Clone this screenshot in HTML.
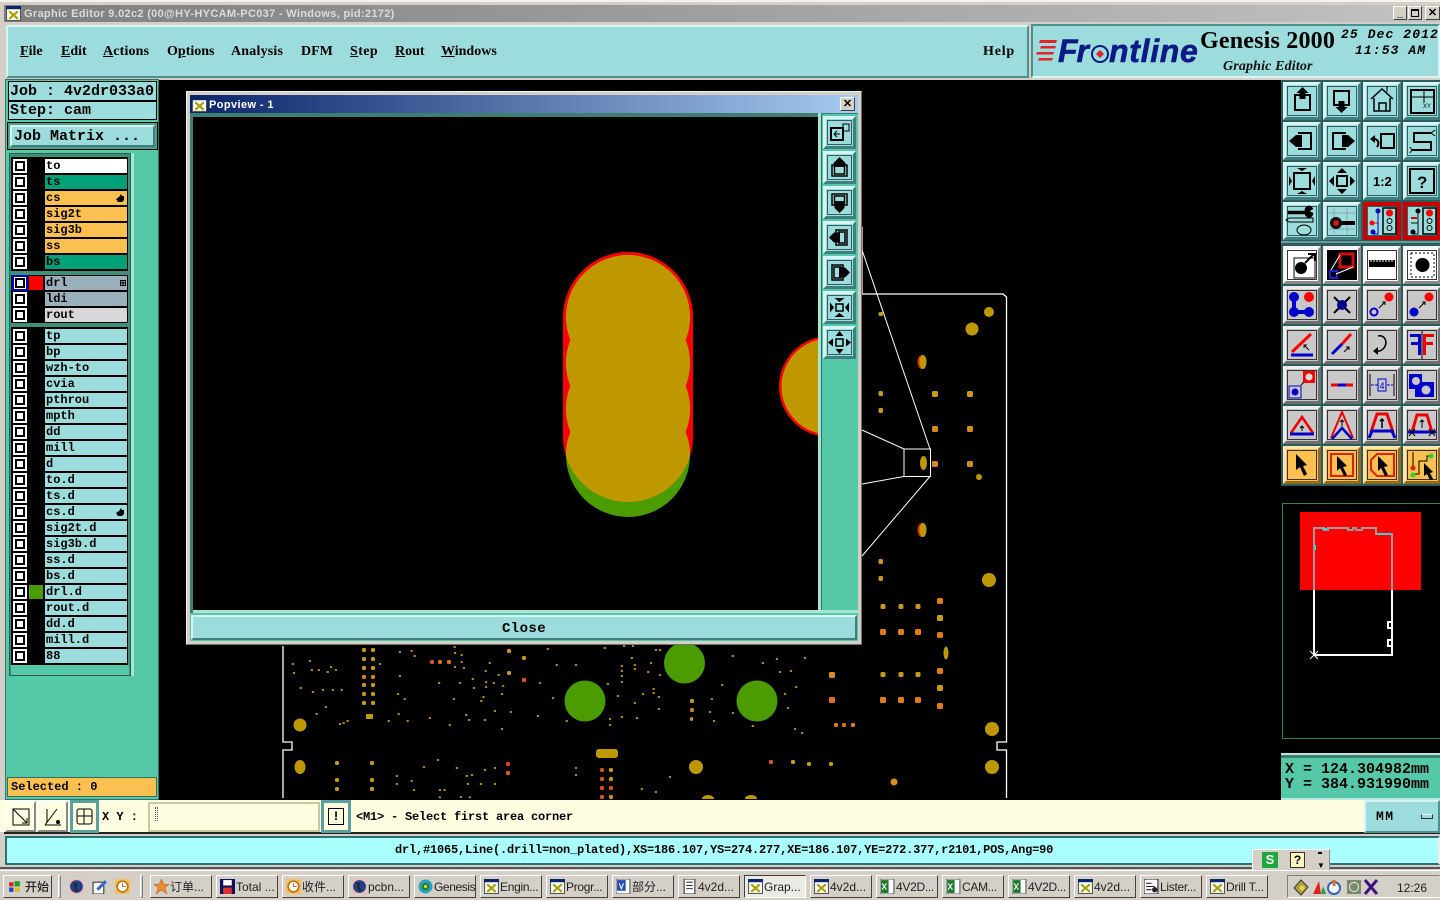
<!DOCTYPE html>
<html><head><meta charset="utf-8"><title>Graphic Editor</title>
<style>
html,body{margin:0;padding:0;background:#000;width:1440px;height:900px;overflow:hidden}
div,span{box-sizing:border-box}
.a,.l,.c,.s,.b,.t,.m{position:absolute}
.m{top:43px;font:bold 14px/17px "Liberation Serif",serif;color:#000;white-space:nowrap}
.m u{text-decoration:underline}
.f{font-family:"Liberation Mono",monospace;font-weight:bold;color:#000;white-space:pre}
.l{left:45px;width:82px;height:14px;font:bold 12px/15px "Liberation Mono",monospace;color:#000;padding-left:1px;background:#9cdcdc;white-space:pre;overflow:hidden}
.c{left:13px;width:14px;height:14px;background:#fff;border:1px solid #fff}
.c:after{content:"";position:absolute;left:1px;top:1px;width:10px;height:10px;border:2px solid #000;box-sizing:border-box;background:#fff}
.b{width:38px;height:38px;border:3px solid;border-color:#d8f4f4 #3f7f7f #3f7f7f #d8f4f4;background:#9cdcdc}
.b:after{content:"";position:absolute;left:1px;top:1px;right:1px;bottom:1px;border:1px solid #2f5f5f}
.w{background:#fff;border-color:#f4f4f4 #8a8a8a #8a8a8a #f4f4f4}
.g{background:#c8c8c8;border-color:#ededed #6f6f6f #6f6f6f #ededed}
.g:after,.w:after,.o:after{border-color:#333}
.o{background:#fcc050;border-color:#ffe6b0 #8f6a20 #8f6a20 #ffe6b0}
.b svg{position:absolute;left:-3px;top:-3px;width:38px;height:38px;z-index:1;overflow:visible}
.p{width:33px;height:33px;left:823px}
.p svg{width:33px;height:33px}
.t{top:875px;height:23px;width:62px;background:#d4d0c8;border:1px solid;border-color:#fff #404040 #404040 #fff;font:12px/23px "Liberation Sans","Noto Sans CJK SC",sans-serif;color:#222;padding-left:19px;white-space:nowrap;overflow:hidden}
.t svg{position:absolute;left:3px;top:3px;width:15px;height:15px}
#q rect,#r rect{rx:1.5px}
</style></head><body>
<svg width="0" height="0" style="position:absolute"><defs>
<symbol id="x" viewBox="0 0 14 14"><rect x=".5" y=".5" width="13" height="13" fill="#fff" stroke="#555"/><rect width="14" height="3" fill="#0a246a"/><path d="M3 5l8 7M11 5l-8 7" stroke="#a8a000" stroke-width="2"/></symbol>
<symbol id="xl" viewBox="0 0 14 14"><rect width="13" height="14" fill="#fff" stroke="#555"/><path d="M1 1h7v12H1z" fill="#1a7a2a"/><path d="M2 4l4 6M6 4l-4 6" stroke="#fff"/></symbol>
<symbol id="gl" viewBox="0 0 14 14"><rect width="14" height="14" fill="#e8c0c0"/><circle cx="7" cy="7" r="6" fill="#24408a"/><path d="M4 3l4 1-1 4 2 3-3 1-1-4z" fill="#2a2a2a"/></symbol>
<symbol id="cl" viewBox="0 0 14 14"><rect width="14" height="14" fill="#f4c060"/><circle cx="7" cy="7" r="5" fill="#fff" stroke="#c07010" stroke-width="1.5"/><path d="M7 4v3h3" stroke="#c07010" fill="none"/></symbol>
</defs></svg>

<!-- window chrome -->
<div class="a" style="left:0;top:0;width:1440px;height:80px;background:#d4d0c8"></div>
<div class="a" style="left:0;top:0;width:1440px;height:2px;background:#f4f2ec"></div>
<div class="a" style="left:4px;top:5px;width:1436px;height:17px;background:linear-gradient(90deg,#7e7e7e,#c2c2c2)"></div>
<svg class="a" style="left:6px;top:6px" width="15" height="15"><use href="#x"/></svg>
<div class="a" style="left:24px;top:6px;font:bold 11px/16px 'Liberation Sans',sans-serif;color:#dcdcdc;white-space:nowrap;letter-spacing:.32px">Graphic Editor 9.02c2 (00@HY-HYCAM-PC037 - Windows, pid:2172)</div>
<div class="a" style="left:1393px;top:6px;width:14px;height:14px;background:#d4d0c8;border:1px solid;border-color:#fff #404040 #404040 #fff;font:bold 11px/12px 'Liberation Sans';text-align:center">_</div>
<div class="a" style="left:1408px;top:6px;width:14px;height:14px;background:#d4d0c8;border:1px solid;border-color:#fff #404040 #404040 #fff"><div class="a" style="left:2px;top:2px;width:8px;height:8px;border:1px solid #000;border-top-width:2px"></div></div>
<div class="a" style="left:1425px;top:6px;width:15px;height:14px;background:#d4d0c8;border:1px solid;border-color:#fff #404040 #404040 #fff;font:bold 11px/12px 'Liberation Sans';text-align:center">✕</div>

<!-- menu -->
<div class="a" style="left:6px;top:25px;width:1023px;height:53px;background:#9cdcdc;border:2px solid;border-color:#d8f4f4 #4f8f8f #4f8f8f #d8f4f4"></div>
<div class="a" style="left:1031px;top:24px;width:409px;height:54px;background:#9cdcdc;border:2px solid;border-color:#4f8f8f #d8f4f4 #d8f4f4 #4f8f8f"></div>
<div class="m" style="left:20px"><u>F</u>ile</div>
<div class="m" style="left:61px"><u>E</u>dit</div>
<div class="m" style="left:103px;letter-spacing:.15px"><u>A</u>ctions</div>
<div class="m" style="left:167px">O<u>p</u>tions</div>
<div class="m" style="left:231px;letter-spacing:.2px">Analysis</div>
<div class="m" style="left:301px">DFM</div>
<div class="m" style="left:350px;letter-spacing:.4px"><u>S</u>tep</div>
<div class="m" style="left:395px"><u>R</u>out</div>
<div class="m" style="left:441px"><u>W</u>indows</div>
<div class="m" style="left:983px;letter-spacing:.8px">Help</div>

<svg class="a" style="left:1036px;top:36px" width="24" height="28"><path d="M4 4h17l-1 3H3zM5 10h15l-1 2.500H4zM1 16h17l-1 2.500H0zM3 22h14l-1 2.500H2z" fill="#e8202a"/></svg>
<div class="a" style="left:1058px;top:32px;font:italic bold 32px/38px 'Liberation Sans',sans-serif;color:#0c1a86;letter-spacing:-1px;white-space:nowrap;-webkit-text-stroke:.6px #0c1a86">Fr<span style="display:inline-block;width:21px"></span><span style="letter-spacing:.7px">ntline</span></div>
<svg class="a" style="left:1089px;top:41px" width="22" height="22"><circle cx="11" cy="13" r="8" fill="none" stroke="#0c1a86" stroke-width="2"/><path d="M11 9l4 4-4 4-4-4z" fill="#e8202a"/></svg>
<div class="a" style="left:1200px;top:26px;font:bold 24px/30px 'Liberation Serif',serif;color:#000;white-space:nowrap;letter-spacing:.2px">Genesis 2000</div>
<div class="a" style="left:1223px;top:58px;font:italic bold 14px/17px 'Liberation Serif',serif;color:#111;white-space:nowrap;letter-spacing:.15px">Graphic Editor</div>
<div class="a f" style="left:1341px;top:27px;font-size:13px;line-height:15px;font-style:italic;letter-spacing:1.1px">25 Dec 2012</div>
<div class="a f" style="left:1355px;top:43px;font-size:13px;line-height:15px;font-style:italic;letter-spacing:1.1px">11:53 AM</div>

<!-- PCB canvas -->
<svg class="a" style="left:0;top:0" width="1440" height="900">
<g fill="#bf9800">
<path d="M862 227V294H1003L1006.500 297V742H997V750H1006.500V798" fill="none" stroke="#fff" stroke-width="1.300"/>
<path d="M862 250L930 449M904 449L862 430M904 476.500L862 484M930 476.500L862 556M904 449H930.500V476.500H904Z" fill="none" stroke="#fff" stroke-width="1"/>
<path d="M283 646V742H292V750H283V798" fill="none" stroke="#fff" stroke-width="1.300"/>
<circle cx="989" cy="312" r="5"/><circle cx="972" cy="329" r="6.500"/><circle cx="989" cy="580" r="7"/><circle cx="992" cy="729" r="7"/><circle cx="992" cy="767" r="7"/><circle cx="979" cy="477" r="3"/><circle cx="894" cy="782" r="3.500" fill="#d8901a"/>
<ellipse cx="922" cy="362" rx="4.500" ry="7" fill="#e03010"/><ellipse cx="923" cy="362" rx="3.500" ry="7"/>
<ellipse cx="922" cy="530" rx="4.500" ry="7" fill="#e03010"/><ellipse cx="923" cy="530" rx="3.500" ry="7"/>
<ellipse cx="923.500" cy="463" rx="3.500" ry="7"/>
<ellipse cx="946" cy="653" rx="2.500" ry="6.500"/>
<g id="r" fill="#c89a18"><rect x="878.500" y="391" width="4.500" height="5"/><rect x="878.500" y="408" width="4.500" height="5"/><rect x="878.500" y="559" width="4.500" height="5"/><rect x="878.500" y="576" width="4.500" height="5"/><rect x="878.500" y="312" width="4.500" height="4"/>
<rect x="932" y="391" width="6" height="6"/><rect x="967" y="391" width="6" height="6"/><rect x="932" y="426" width="6" height="6" fill="#d88a18"/><rect x="967" y="426" width="6" height="6" fill="#d88a18"/><rect x="932" y="461" width="6" height="6" fill="#d88a18"/><rect x="967" y="461" width="6" height="6" fill="#d88a18"/>
<rect x="880.500" y="604" width="5" height="5"/><rect x="898.500" y="604" width="5" height="5"/><rect x="915.500" y="604" width="5" height="5"/><rect x="880" y="629" width="6" height="6" fill="#e07a18"/><rect x="898" y="629" width="6" height="6" fill="#e07a18"/><rect x="915" y="629" width="6" height="6" fill="#e07a18"/>
<rect x="880.500" y="672" width="5" height="5"/><rect x="898.500" y="672" width="5" height="5"/><rect x="915.500" y="672" width="5" height="5"/><rect x="880" y="697" width="6" height="6" fill="#e07a18"/><rect x="898" y="697" width="6" height="6" fill="#e07a18"/><rect x="915" y="697" width="6" height="6" fill="#e07a18"/>
<rect x="937" y="598" width="6" height="6" fill="#e07a18"/><rect x="937" y="615" width="6" height="6"/><rect x="937" y="632" width="6" height="6" fill="#e07a18"/><rect x="937" y="668" width="6" height="6" fill="#e07a18"/><rect x="937" y="685" width="6" height="6"/><rect x="937" y="703" width="6" height="6" fill="#e07a18"/>
</g>
<g fill="#4a9c00"><circle cx="684.500" cy="663" r="20.500"/><circle cx="585" cy="701" r="20.500"/><circle cx="757" cy="701" r="20.500"/></g>
<circle cx="300" cy="725" r="6.500"/><ellipse cx="300" cy="767" rx="5.500" ry="7"/><circle cx="696" cy="767" r="7"/>
<rect x="596" y="749" width="22" height="9" rx="3"/><rect x="366" y="714" width="7" height="5"/>
<path d="M702 799a6 4 0 0 1 12 0zM745 799a6 4 0 0 1 12 0z"/>
<g id="q" fill="#c89a10">
<rect x="362" y="648" width="4" height="4"/><rect x="371" y="648" width="4" height="4"/><rect x="362" y="657" width="4" height="4"/><rect x="371" y="657" width="4" height="4"/><rect x="362" y="666" width="4" height="4"/><rect x="371" y="666" width="4" height="4"/><rect x="362" y="675" width="4" height="4" fill="#d8801a"/><rect x="371" y="675" width="4" height="4" fill="#d8801a"/><rect x="362" y="683" width="4" height="4"/><rect x="371" y="683" width="4" height="4"/><rect x="362" y="692" width="4" height="4"/><rect x="371" y="692" width="4" height="4"/><rect x="362" y="701" width="4" height="4"/><rect x="371" y="701" width="4" height="4"/>
<rect x="335" y="761" width="4" height="4"/><rect x="370" y="761" width="4" height="4"/><rect x="335" y="778" width="4" height="4"/><rect x="370" y="778" width="4" height="4"/><rect x="335" y="787" width="4" height="4"/><rect x="370" y="787" width="4" height="4"/>
<rect x="430" y="660" width="4" height="4" fill="#e0501a"/><rect x="438" y="660" width="4" height="4" fill="#e0701a"/><rect x="447" y="660" width="4" height="4" fill="#e0701a"/>
<rect x="507" y="649" width="4" height="4"/><rect x="522" y="656" width="4" height="4"/><rect x="507" y="671" width="4" height="4"/><rect x="522" y="678" width="4" height="4" fill="#e0501a"/><rect x="506" y="762" width="4" height="4" fill="#e8401a"/><rect x="506" y="771" width="4" height="4" fill="#e0601a"/>
<rect x="600" y="768" width="4" height="4" fill="#e0501a"/><rect x="609" y="768" width="4" height="4"/><rect x="600" y="777" width="4" height="4" fill="#e0501a"/><rect x="609" y="777" width="4" height="4"/><rect x="600" y="786" width="4" height="4" fill="#e0501a"/><rect x="609" y="786" width="4" height="4" fill="#e0501a"/><rect x="600" y="795" width="4" height="4" fill="#e0501a"/><rect x="609" y="795" width="4" height="4"/>
<rect x="690" y="699" width="4" height="4"/><rect x="690" y="708" width="4" height="4" fill="#d8801a"/><rect x="690" y="717" width="3" height="4"/>
<rect x="829" y="672" width="6" height="6" fill="#d8901a"/><rect x="829" y="697" width="6" height="6" fill="#e0701a"/><rect x="834" y="723" width="4" height="4" fill="#d8801a"/><rect x="842" y="723" width="4" height="4" fill="#e0701a"/><rect x="851" y="723" width="4" height="4" fill="#d8801a"/>
<rect x="769" y="760" width="4" height="4" fill="#e0501a"/><rect x="791" y="760" width="4" height="4"/><rect x="807" y="762" width="4" height="4"/><rect x="829" y="762" width="4" height="4"/>
</g>
<g transform="translate(280 640) scale(.37 .3333)"><path fill="none" stroke="#c89a10" stroke-width="5" d="M32 72h6M78 63h6M35 99h6M83 90h6M102 90h6M126 96h6M135 81h6M148 90h6M53 144h6M86 156h6M113 150h6M140 150h6M164 150h6M121 201h6M96 222h6M159 252h6M169 249h6M180 243h6M267 72h6M321 36h6M353 33h6M361 48h6M321 108h6M316 162h6M334 177h6M318 222h6M291 243h6M342 243h6M402 234h6M427 129h6M469 21h6M470 39h6M488 45h6M488 66h6M470 81h6M494 84h6M483 129h6M467 177h6M518 117h6M521 144h6M553 93h6M554 126h6M554 141h6M575 129h6M588 105h6M600 138h6M597 162h6M547 171h6M541 183h6M564 69h6M578 213h6M621 216h6M500 225h6M508 240h6M551 240h6M456 255h6M597 267h6M694 228h6M700 129h6M735 174h6M721 27h6M745 75h6M797 75h6M772 243h6M875 24h6M927 18h6M951 18h6M1013 30h6M1024 30h6M948 54h6M921 78h6M921 93h6M921 108h6M921 126h6M956 75h6M956 87h6M1000 69h6M992 96h6M1024 105h6M883 132h6M910 168h6M956 189h6M978 162h6M1007 147h6M1007 159h6M1021 171h6M1021 207h6M889 237h6M889 255h6M921 231h6M962 234h6M1164 177h6M1159 216h6M1170 243h6M1192 135h6M1221 48h6M1221 219h6M1275 258h6M1302 69h6M1340 57h6M1348 96h6M1378 93h6M1416 54h6M1392 141h6M1362 162h6M1370 204h6M1389 267h6M1408 279h6M424 360h6M386 381h6M475 384h6M551 390h6M578 384h6M502 408h6M516 405h6M505 432h6M540 432h6M578 432h6M313 408h6M353 423h6M313 432h6M359 450h6M429 450h6M442 450h6M429 472h6M486 471h6M510 472h6M797 384h6M797 405h6M1051 411h6M975 447h6M1013 456h6"/></g>
</g>
</svg>

<!-- left panel -->
<div class="a" style="left:0;top:78px;width:6px;height:760px;background:#d4d0c8"></div>
<div class="a" style="left:5px;top:79px;width:154px;height:721px;background:#55c8a8;border:1px solid;border-color:#2f6f5f #2f6f5f #2f6f5f #3a7a6a"></div>
<div class="a f" style="left:8px;top:81px;width:149px;height:20px;background:#9cdcdc;border:1px solid #000;font-size:15px;line-height:20px;padding-left:1px">Job : 4v2dr033a0</div>
<div class="a f" style="left:8px;top:101px;width:149px;height:19px;background:#9cdcdc;border:1px solid #000;font-size:15px;line-height:18px;padding-left:1px">Step: cam</div>
<div class="a" style="left:7px;top:122px;width:151px;height:28px;background:#4aa088;border:1px solid #000"></div>
<div class="a f" style="left:10px;top:125px;width:145px;height:22px;background:#9cdcdc;border:2px solid;border-color:#d8f4f4 #3f7f7f #3f7f7f #d8f4f4;font-size:15px;line-height:19px;padding-left:2px">Job Matrix ...</div>
<div class="a" style="left:9px;top:153px;width:122px;height:523px;background:#3d8f78;border:1px solid #2a5f50"></div>
<div class="a" style="left:131px;top:153px;width:3px;height:523px;background:#a8e4d4"></div>
<div class="a" style="left:11px;top:157px;width:117px;height:114px;background:#000"></div>
<div class="a" style="left:11px;top:275px;width:117px;height:48px;background:#000"></div>
<div class="a" style="left:11px;top:327px;width:117px;height:338px;background:#000"></div>
<div class="a" style="left:11px;top:665px;width:118px;height:10px;background:#55c8a8"></div>

<div class="c" style="top:159px"></div><div class="l" style="top:159px;background:#fff">to</div>
<div class="c" style="top:175px"></div><div class="l" style="top:175px;background:#00a078">ts</div>
<div class="c" style="top:191px"></div><div class="l" style="top:191px;background:#fcc050">cs</div>
<div class="c" style="top:207px"></div><div class="l" style="top:207px;background:#fcc050">sig2t</div>
<div class="c" style="top:223px"></div><div class="l" style="top:223px;background:#fcc050">sig3b</div>
<div class="c" style="top:239px"></div><div class="l" style="top:239px;background:#fcc050">ss</div>
<div class="c" style="top:255px"></div><div class="l" style="top:255px;background:#00a078">bs</div>
<svg class="a" style="left:116px;top:194px" width="9" height="9"><path d="M0 5l3-2 2-3 1 2h2v4l-2 2H2z"/></svg>

<div class="a" style="left:12px;top:275px;width:16px;height:16px;background:#0000c8"></div>
<div class="c" style="top:276px;left:13px;border-color:#0000c8"></div>
<div class="a" style="left:29px;top:276px;width:14px;height:14px;background:#f00"></div>
<div class="l" style="top:276px;background:#9ab0bc">drl</div>
<svg class="a" style="left:120px;top:280px" width="6" height="6"><path d="M.5.500h5v5h-5zM3 0v6M0 3h6" fill="none" stroke="#000"/></svg>
<div class="c" style="top:292px"></div><div class="l" style="top:292px;background:#9ab0bc">ldi</div>
<div class="c" style="top:308px"></div><div class="l" style="top:308px;background:#d8d8d8">rout</div>

<div class="c" style="top:329px"></div><div class="l" style="top:329px">tp</div>
<div class="c" style="top:345px"></div><div class="l" style="top:345px">bp</div>
<div class="c" style="top:361px"></div><div class="l" style="top:361px">wzh-to</div>
<div class="c" style="top:377px"></div><div class="l" style="top:377px">cvia</div>
<div class="c" style="top:393px"></div><div class="l" style="top:393px">pthrou</div>
<div class="c" style="top:409px"></div><div class="l" style="top:409px">mpth</div>
<div class="c" style="top:425px"></div><div class="l" style="top:425px">dd</div>
<div class="c" style="top:441px"></div><div class="l" style="top:441px">mill</div>
<div class="c" style="top:457px"></div><div class="l" style="top:457px">d</div>
<div class="c" style="top:473px"></div><div class="l" style="top:473px">to.d</div>
<div class="c" style="top:489px"></div><div class="l" style="top:489px">ts.d</div>
<div class="c" style="top:505px"></div><div class="l" style="top:505px">cs.d</div>
<svg class="a" style="left:116px;top:508px" width="9" height="9"><path d="M0 5l3-2 2-3 1 2h2v4l-2 2H2z"/></svg>
<div class="c" style="top:521px"></div><div class="l" style="top:521px">sig2t.d</div>
<div class="c" style="top:537px"></div><div class="l" style="top:537px">sig3b.d</div>
<div class="c" style="top:553px"></div><div class="l" style="top:553px">ss.d</div>
<div class="c" style="top:569px"></div><div class="l" style="top:569px">bs.d</div>
<div class="c" style="top:585px"></div><div class="a" style="left:29px;top:585px;width:14px;height:14px;background:#4a9c00"></div><div class="l" style="top:585px">drl.d</div>
<div class="c" style="top:601px"></div><div class="l" style="top:601px">rout.d</div>
<div class="c" style="top:617px"></div><div class="l" style="top:617px">dd.d</div>
<div class="c" style="top:633px"></div><div class="l" style="top:633px">mill.d</div>
<div class="c" style="top:649px"></div><div class="l" style="top:649px">88</div>

<div class="a f" style="left:7px;top:777px;width:150px;height:20px;background:#fcc050;border:1px solid #2f6f5f;font-size:12px;line-height:19px;padding-left:3px">Selected : 0</div>

<!-- popview -->
<div class="a" style="left:186px;top:91px;width:676px;height:554px;background:#d4d0c8;border:1px solid;border-color:#f0f0f0 #707070 #707070 #f0f0f0"></div>
<div class="a" style="left:190px;top:95px;width:668px;height:18px;background:linear-gradient(90deg,#0a246a,#a6caf0)"></div>
<svg class="a" style="left:192px;top:97px" width="15" height="15"><use href="#x"/></svg>
<div class="a" style="left:209px;top:97px;font:bold 11px/16px 'Liberation Sans',sans-serif;color:#fff;white-space:nowrap;letter-spacing:.4px">Popview - 1</div>
<div class="a" style="left:840px;top:97px;width:15px;height:14px;background:#d4d0c8;border:1px solid;border-color:#fff #404040 #404040 #fff;font:bold 11px/12px 'Liberation Sans';text-align:center">✕</div>
<div class="a" style="left:190px;top:113px;width:668px;height:528px;background:#3f7f70"></div>
<div class="a" style="left:193px;top:117px;width:625px;height:494px;background:#000;overflow:hidden">
<svg width="625" height="494" viewBox="193 117 625 494" style="display:block">
<defs><clipPath id="rs"><rect x="563" y="252" width="130" height="250" rx="65"/></clipPath></defs>
<rect x="563" y="252" width="130" height="250" rx="65" fill="#f00"/>
<g fill="#4a9c00"><circle cx="628" cy="317" r="62"/><circle cx="628" cy="363" r="62"/><circle cx="628" cy="409" r="62"/><circle cx="628" cy="455" r="62"/></g>
<g fill="#bf9800" clip-path="url(#rs)"><circle cx="628" cy="317" r="62"/><circle cx="628" cy="363" r="62"/><circle cx="628" cy="409" r="62"/><circle cx="628" cy="455" r="62"/></g>
<circle cx="829.500" cy="386.500" r="50.500" fill="#f00"/><circle cx="829.500" cy="386.500" r="48" fill="#bf9800"/>
</svg></div>
<div class="a" style="left:818px;top:113px;width:3px;height:500px;background:#a8e4d4"></div>
<div class="a" style="left:821px;top:114px;width:37px;height:498px;background:#55c8a8;border-left:1px solid #2f6f5f"></div>
<div class="a" style="left:193px;top:610px;width:665px;height:3px;background:#a8e4d4"></div>
<div class="a" style="left:190px;top:613px;width:668px;height:28px;background:#55c8a8"></div>
<div class="a f" style="left:191px;top:615px;width:666px;height:25px;background:#9cdcdc;border:2px solid;border-color:#d8f4f4 #3f7f7f #3f7f7f #d8f4f4;font-size:14px;line-height:25px;text-align:center;letter-spacing:.4px">Close</div>

<div class="b p" style="top:116px"><svg viewBox="0 0 33 33"><path d="M8 12h12v12H8z" fill="none" stroke="#000" stroke-width="2"/><path d="M11 18h6M11 18l3-3M11 18l3 3" stroke="#000" fill="none"/><path d="M20 8h6v7h-6z" fill="none" stroke="#000"/></svg></div>
<div class="b p" style="top:151px"><svg viewBox="0 0 33 33"><path d="M9 14h15v11H9zM11.500 16v7h10v-7" fill="none" stroke="#000" stroke-width="1.500"/><path d="M16.500 6l-6 6v4h12v-4z"/></svg></div>
<div class="b p" style="top:186px"><svg viewBox="0 0 33 33"><path d="M9 8h15v11H9zM11.500 10v7h10v-7z" fill="none" stroke="#000" stroke-width="1.500"/><path d="M16.500 27l-5-5v-7h10v7z"/></svg></div>
<div class="b p" style="top:221px"><svg viewBox="0 0 33 33"><path d="M13 9h11v15H13zM15 11h7v11h-7" fill="none" stroke="#000" stroke-width="1.500"/><path d="M6 16.500l5-5h6v10h-6z"/></svg></div>
<div class="b p" style="top:256px"><svg viewBox="0 0 33 33"><path d="M9 9h11v15H9zM11 11h7v11h-7z" fill="none" stroke="#000" stroke-width="1.500"/><path d="M27 16.500l-5-5h-6v10h6z"/></svg></div>
<div class="b p" style="top:291px"><svg viewBox="0 0 33 33"><rect x="13" y="13" width="7" height="7" fill="none" stroke="#000" stroke-width="1.500"/><path d="M16.500 11l-5-4h10zM16.500 22l-5 4h10zM11 16.500l-4-5v10zM22 16.500l4-5v10z"/></svg></div>
<div class="b p" style="top:326px"><svg viewBox="0 0 33 33"><rect x="13" y="13" width="7" height="7" fill="none" stroke="#000" stroke-width="1.500"/><path d="M16.500 5l-4 5h8zM16.500 28l-4-5h8zM5 16.500l5-4v8zM28 16.500l-5-4v8z"/></svg></div>

<!-- right panel -->
<div class="a" style="left:1281px;top:80px;width:159px;height:406px;background:#2c5c5c"></div>
<div class="a" style="left:1281px;top:241px;width:159px;height:2px;background:#6a9a9a"></div>
<div class="a" style="left:1282px;top:503px;width:158px;height:236px;border:1px solid #3f7f3f;border-right:0"></div>
<svg class="a" style="left:1282px;top:503px" width="158" height="236">
<rect x="18" y="9" width="121" height="78" fill="#f00"/>
<g transform="translate(-1282 -503)" fill="none" stroke-width="2">
<path d="M1314 590V655H1392V590M1392 622h-4v6h4M1392 640h-4v6h4" stroke="#fff"/>
<path d="M1310 651l8 8M1318 651l-8 8" stroke="#fff" stroke-width="1"/>
<path d="M1314 590V528H1324V530H1328V528H1348V530H1353V528H1356V530H1362V528H1376V534H1392V590" stroke="#9a9a9a"/>
<path d="M1322 529h5M1377 534h14M1315 545v5" stroke="#30d8e0"/>
</g></svg>
<div class="a" style="left:1281px;top:753px;width:159px;height:47px;background:#55c8a8;border-top:2px solid #b8e8e0;border-bottom:2px solid #b8e8e0"></div>
<div class="a" style="left:1281px;top:755px;width:159px;height:3px;background:#3f7f6f"></div>
<div class="a f" style="left:1285px;top:762px;font-size:15px;line-height:16px">X = 124.304982mm</div>
<div class="a f" style="left:1285px;top:777px;font-size:15px;line-height:16px">Y = 384.931990mm</div>

<!-- row 1 -->
<div class="b" style="left:1283px;top:82px"><svg viewBox="0 0 38 38"><rect x="12" y="13" width="15" height="15" fill="none" stroke="#000" stroke-width="2"/><path d="M19.500 5l-6 6h3v6h6v-6h3z"/></svg></div>
<div class="b" style="left:1323px;top:82px"><svg viewBox="0 0 38 38"><rect x="11" y="9" width="15" height="14" fill="none" stroke="#000" stroke-width="2"/><path d="M18.500 31l-6-6h3v-6h6v6h3z"/></svg></div>
<div class="b" style="left:1363px;top:82px"><svg viewBox="0 0 38 38"><path d="M8 17L19 7l11 10M11 16v13h16V16M16 29v-8h7v8" fill="none" stroke="#000" stroke-width="1.500"/><path d="M24 10V5h1" stroke="#000" fill="none"/></svg></div>
<div class="b" style="left:1403px;top:82px"><svg viewBox="0 0 38 38"><rect x="8" y="8" width="23" height="23" fill="none" stroke="#000" stroke-width="2"/><path d="M21 8v13M8 15h23" stroke="#000"/><text x="20" y="26" font-size="6" font-family="Liberation Sans" fill="#000">XY</text></svg></div>
<!-- row 2 -->
<div class="b" style="left:1283px;top:122px"><svg viewBox="0 0 38 38"><path d="M15 11h13v16H15" fill="none" stroke="#000" stroke-width="2"/><path d="M6 19l7-6h6v12h-6z"/></svg></div>
<div class="b" style="left:1323px;top:122px"><svg viewBox="0 0 38 38"><path d="M23 11H10v16h13" fill="none" stroke="#000" stroke-width="2"/><path d="M32 19l-7-6h-6v12h6z"/></svg></div>
<div class="b" style="left:1363px;top:122px"><svg viewBox="0 0 38 38"><rect x="18" y="12" width="13" height="14" fill="none" stroke="#000" stroke-width="2"/><path d="M14 25c3-4 1-9-5-8" fill="none" stroke="#000" stroke-width="2"/><path d="M7 17l5-4v8z"/></svg></div>
<div class="b" style="left:1403px;top:122px"><svg viewBox="0 0 38 38"><path d="M28 11H11v9h17v8H9" fill="none" stroke="#000" stroke-width="2"/><path d="M28 11l4-3M28 11l4 3M9 28l-2-3M9 28l-2 3" stroke="#000" fill="none"/></svg></div>
<!-- row 3 -->
<div class="b" style="left:1283px;top:162px"><svg viewBox="0 0 38 38"><rect x="11" y="11" width="16" height="16" fill="none" stroke="#000" stroke-width="2"/><path d="M19 9l-5-3h10zM19 29l-5 3h10zM9 19l-3-5v10zM29 19l3-5v10z"/></svg></div>
<div class="b" style="left:1323px;top:162px"><svg viewBox="0 0 38 38"><rect x="14" y="14" width="10" height="10" fill="none" stroke="#000" stroke-width="2"/><path d="M19 6l-5 5h10zM19 32l-5-5h10zM6 19l5-5v10zM32 19l-5-5v10z"/></svg></div>
<div class="b" style="left:1363px;top:162px"><svg viewBox="0 0 38 38"><text x="10" y="24" font-size="13" font-weight="bold" font-family="Liberation Sans" fill="#000">1:2</text></svg></div>
<div class="b" style="left:1403px;top:162px"><svg viewBox="0 0 38 38"><rect x="7" y="7" width="24" height="24" fill="none" stroke="#000" stroke-width="2"/><text x="14" y="26" font-size="17" font-weight="bold" font-family="Liberation Sans" fill="#000">?</text></svg></div>
<!-- row 4 -->
<div class="b" style="left:1283px;top:202px"><svg viewBox="0 0 38 38"><path d="M5 9h17a4 4 0 0 1 8-2l-4 2 4 2a4 4 0 0 1-8 1H5z" stroke="#000" fill="#000" stroke-width=".5"/><path d="M6 16h24v4H6l-3-2z" fill="none" stroke="#000"/><ellipse cx="21" cy="28" rx="7" ry="5" fill="none" stroke="#000"/></svg></div>
<div class="b" style="left:1323px;top:202px"><svg viewBox="0 0 38 38"><path d="M6 11h26M6 27h26M11 6v26M24 6v26" stroke="#8aa"/><rect x="16" y="19" width="16" height="4"/><circle cx="13" cy="21" r="6" fill="#111"/><rect x="10" y="18" width="6" height="6" fill="#c22" stroke="#300"/></svg></div>
<div class="b" style="left:1363px;top:202px;border-color:#b00;background:#9cdcdc"><svg viewBox="0 0 38 38"><rect x="2" y="2" width="34" height="34" fill="none" stroke="#c00" stroke-width="4"/><path d="M15 8v13H8M15 21v11" stroke="#f00" fill="none"/><path d="M15 8v24H10" stroke="#00c" fill="none"/><circle cx="15" cy="9" r="2.500" fill="#00c"/><circle cx="9" cy="21" r="2.500" fill="#f00"/><circle cx="10" cy="30" r="2.500" fill="#00c"/><rect x="20" y="6" width="13" height="26" fill="none" stroke="#000" stroke-width="1.500"/><circle cx="26.500" cy="11" r="3.500" fill="#f00"/><circle cx="26.500" cy="19" r="2.500" fill="none" stroke="#000"/><circle cx="26.500" cy="26" r="2.500" fill="none" stroke="#000"/></svg></div>
<div class="b" style="left:1403px;top:202px;border-color:#b00;background:#9cdcdc"><svg viewBox="0 0 38 38"><rect x="2" y="2" width="34" height="34" fill="none" stroke="#c00" stroke-width="4"/><path d="M15 8v13H8M15 21v11H10" stroke="#111" fill="none"/><path d="M8 16h6" stroke="#c00" stroke-width="2"/><circle cx="15" cy="9" r="2.500"/><circle cx="10" cy="30" r="2.500"/><rect x="20" y="6" width="13" height="26" fill="none" stroke="#000" stroke-width="1.500"/><circle cx="26.500" cy="11" r="3.500" fill="#f00"/><circle cx="26.500" cy="19" r="2.500" fill="none" stroke="#000"/><circle cx="26.500" cy="26" r="2.500" fill="none" stroke="#000"/></svg></div>
<!-- row 5 -->
<div class="b w" style="left:1283px;top:246px"><svg viewBox="0 0 38 38"><rect x="11" y="12" width="21" height="20" fill="none" stroke="#000"/><circle cx="18" cy="22" r="6"/><path d="M22 17l9-9M25 8h7v7" stroke="#000" stroke-width="2" fill="none"/></svg></div>
<div class="b w" style="left:1323px;top:246px"><svg viewBox="0 0 38 38"><rect x="4" y="4" width="30" height="30"/><rect x="17" y="8" width="13" height="13" fill="none" stroke="#d01010" stroke-width="3"/><rect x="7" y="25" width="7" height="7" fill="none" stroke="#2020d0" stroke-width="2"/><path d="M8 24L17 9M13 28l17-7" stroke="#fff"/></svg></div>
<div class="b w" style="left:1363px;top:246px"><svg viewBox="0 0 38 38"><path d="M6 14h26v7H6z"/><path d="M8 12v4M11 12v4M14 12v4M17 12v4M20 12v4M23 12v4M26 12v4M29 12v4" stroke="#fff"/></svg></div>
<div class="b w" style="left:1403px;top:246px"><svg viewBox="0 0 38 38"><rect x="8" y="7" width="23" height="24" fill="none" stroke="#000" stroke-dasharray="2 2"/><circle cx="19.500" cy="19" r="7"/></svg></div>
<!-- row 6 -->
<div class="b g" style="left:1283px;top:286px"><svg viewBox="0 0 38 38"><path d="M11 11v15h15" stroke="#00c" stroke-width="4" fill="none"/><circle cx="11" cy="11" r="5" fill="#00c"/><circle cx="11" cy="26" r="5" fill="#00c"/><circle cx="26" cy="26" r="5" fill="#00c"/><circle cx="26" cy="11" r="5" fill="#f00"/></svg></div>
<div class="b g" style="left:1323px;top:286px"><svg viewBox="0 0 38 38"><path d="M11 11l16 16M27 11L11 27" stroke="#000" stroke-width="2"/><circle cx="19" cy="19" r="5" fill="#00008a"/></svg></div>
<div class="b g" style="left:1363px;top:286px"><svg viewBox="0 0 38 38"><circle cx="26" cy="11" r="4.500" fill="#f00"/><circle cx="11" cy="26" r="3.500" fill="none" stroke="#00c" stroke-width="2"/><path d="M16 22l6-6M19 16h3v3" stroke="#000" fill="none"/></svg></div>
<div class="b g" style="left:1403px;top:286px"><svg viewBox="0 0 38 38"><circle cx="26" cy="11" r="4.500" fill="#f00"/><circle cx="11" cy="26" r="4.500" fill="#00c"/><path d="M16 22l6-6M19 16h3v3" stroke="#000" fill="none"/></svg></div>
<!-- row 7 -->
<div class="b g" style="left:1283px;top:326px"><svg viewBox="0 0 38 38"><path d="M9 26l19-18" stroke="#f00" stroke-width="3"/><path d="M8 29h22" stroke="#00c" stroke-width="3"/><path d="M26 24l-5-5M21 22v-3h3" stroke="#000" fill="none"/></svg></div>
<div class="b g" style="left:1323px;top:326px"><svg viewBox="0 0 38 38"><path d="M19 18l9-10" stroke="#f00" stroke-width="3"/><path d="M9 28l10-10" stroke="#00c" stroke-width="3"/><path d="M21 26l5-5M23 21h3v3" stroke="#000" fill="none"/></svg></div>
<div class="b g" style="left:1363px;top:326px"><svg viewBox="0 0 38 38"><path d="M15 10c8-2 12 10 2 15h-4" fill="none" stroke="#000" stroke-width="1.500"/><path d="M10 25l5-4v8z"/></svg></div>
<div class="b g" style="left:1403px;top:326px"><svg viewBox="0 0 38 38"><path d="M18 8H7v3h8v5H8v3h7v10h3z" fill="#00c"/><path d="M20 8h11v3h-8v5h7v3h-7v10h-3z" fill="#e00"/><path d="M19 5v28" stroke="#000"/></svg></div>
<!-- row 8 -->
<div class="b g" style="left:1283px;top:366px"><svg viewBox="0 0 38 38"><rect x="20" y="5" width="12" height="12" fill="#f00"/><circle cx="26" cy="11" r="3.500" fill="#ddd"/><rect x="6" y="20" width="12" height="12" fill="none" stroke="#00c"/><circle cx="12" cy="26" r="3.500" fill="#00c"/><path d="M18 19l3-3" stroke="#000"/></svg></div>
<div class="b g" style="left:1323px;top:366px"><svg viewBox="0 0 38 38"><path d="M8 19h22" stroke="#e00" stroke-width="3"/><path d="M15 19h8" stroke="#00c" stroke-width="3"/></svg></div>
<div class="b g" style="left:1363px;top:366px"><svg viewBox="0 0 38 38"><path d="M7 8v22M31 8v22" stroke="#000"/><path d="M8 19h22" stroke="#00c" stroke-dasharray="3 1"/><rect x="15" y="13" width="8" height="12" fill="#c8c8c8" stroke="#00c"/><text x="16.500" y="23" font-size="9" fill="#00c" font-family="Liberation Sans">4</text></svg></div>
<div class="b g" style="left:1403px;top:366px"><svg viewBox="0 0 38 38"><path d="M6 8h13v8h12v15H12v-8H6z" fill="#00c"/><circle cx="13" cy="15" r="4" fill="#c8c8c8"/><circle cx="23" cy="24" r="4.500" fill="#c8c8c8"/></svg></div>
<!-- row 9 -->
<div class="b g" style="left:1283px;top:406px"><svg viewBox="0 0 38 38"><path d="M8 27L19 11l11 16" fill="none" stroke="#e00" stroke-width="2.500"/><path d="M7 28h24" stroke="#00c" stroke-width="3"/><path d="M19 25v-5M17 22l2-2 2 2" stroke="#000" fill="none"/></svg></div>
<div class="b g" style="left:1323px;top:406px"><svg viewBox="0 0 38 38"><path d="M8 32L19 6l11 26" fill="none" stroke="#e00" stroke-width="2"/><path d="M9 33l10-11 10 11" fill="none" stroke="#00c" stroke-width="2.500"/><path d="M19 20v-6M17 16l2-2 2 2" stroke="#000" fill="none"/></svg></div>
<div class="b g" style="left:1363px;top:406px"><svg viewBox="0 0 38 38"><path d="M8 26L14 8h10l6 18" fill="none" stroke="#e00" stroke-width="3"/><path d="M6 32l3-7h20l3 7" fill="none" stroke="#00c" stroke-width="3"/><path d="M19 22v-9M17 15l2-2 2 2" stroke="#000" fill="none" stroke-width="1.500"/></svg></div>
<div class="b g" style="left:1403px;top:406px"><svg viewBox="0 0 38 38"><path d="M9 26L14 9h10l5 17" fill="none" stroke="#e00" stroke-width="3"/><path d="M5 26h28" stroke="#00c" stroke-width="3"/><path d="M6 23l6 7M12 23l-6 7M26 23l6 7M32 23l-6 7" stroke="#000"/><path d="M19 22v-8M17 16l2-2 2 2" stroke="#000" fill="none"/></svg></div>
<!-- row 10 -->
<div class="b o" style="left:1283px;top:446px"><svg viewBox="0 0 38 38"><path d="M13 8l11 11-4 1 4 8-3 2-4-9-4 3z"/></svg></div>
<div class="b o" style="left:1323px;top:446px"><svg viewBox="0 0 38 38"><rect x="8" y="8" width="22" height="22" fill="none" stroke="#e02010" stroke-width="2"/><path d="M14 10l10 10-4 1 4 8-3 1-4-8-3 3z"/></svg></div>
<div class="b o" style="left:1363px;top:446px"><svg viewBox="0 0 38 38"><path d="M14 8h17v22H14l-6-6V14z" fill="none" stroke="#e02010" stroke-width="2"/><path d="M15 10l10 10-4 1 4 8-3 1-4-8-3 3z"/></svg></div>
<div class="b o" style="left:1403px;top:446px"><svg viewBox="0 0 38 38"><path d="M10 6v16M10 28h6V15h8V10h4" fill="none" stroke="#000"/><circle cx="10" cy="22" r="2.500" fill="#e02010"/><circle cx="10" cy="29" r="2.500" fill="#30d030"/><circle cx="28" cy="10" r="2.500" fill="#30d030"/><path d="M21 17l9 9-3 1 3 6-3 1-3-6-3 2z"/></svg></div>

<!-- bottom toolbar -->
<div class="a" style="left:0;top:800px;width:1440px;height:33px;background:#fffde0"></div>
<div class="a" style="left:0;top:832px;width:1440px;height:40px;background:#d4d0c8"></div>
<div class="a" style="left:4px;top:832px;width:1436px;height:2px;background:#222"></div>
<div class="a" style="left:5px;top:801px;width:31px;height:31px;border:2px solid;border-color:#fff #888 #888 #fff;background:#fffde0"><svg width="27" height="27" style="display:block"><rect x="6" y="6" width="16" height="16" fill="none" stroke="#000"/><path d="M6 6l14 14M20 15v5h-5" fill="none" stroke="#000"/></svg></div>
<div class="a" style="left:37px;top:801px;width:31px;height:31px;border:2px solid;border-color:#fff #888 #888 #fff;background:#fffde0"><svg width="27" height="27" style="display:block"><path d="M6 22h16M6 22L18 6" fill="none" stroke="#000"/><path d="M8 6v14" stroke="#000"/><circle cx="19" cy="19" r="2"/></svg></div>
<div class="a" style="left:70px;top:800px;width:29px;height:33px;border:3px solid #5aa0a0;background:#fffde0"><svg width="23" height="27" style="display:block"><rect x="4" y="6" width="15" height="15" rx="2" fill="none" stroke="#000"/><path d="M11 6v15M4 13h15" stroke="#000"/></svg></div>
<div class="a f" style="left:102px;top:809px;font-size:12px;line-height:16px">X Y :</div>
<div class="a" style="left:148px;top:802px;width:172px;height:30px;border:2px solid #c8c8a0;background:#fffde0"></div>
<div class="a" style="left:155px;top:807px;width:3px;height:14px;border-left:1px dotted #555;border-right:1px dotted #555"></div>
<div class="a" style="left:321px;top:800px;width:30px;height:33px;border:3px solid #5aa0a0;background:#fffde0"><div class="a" style="left:4px;top:5px;width:16px;height:17px;border:1px solid #000;font:bold 13px/15px 'Liberation Mono';text-align:center">!</div></div>
<div class="a f" style="left:356px;top:809px;font-size:12px;line-height:16px;letter-spacing:-.2px">&lt;M1&gt; - Select first area corner</div>
<div class="a" style="left:1364px;top:800px;width:76px;height:33px;background:#9cdcdc;border:2px solid;border-color:#d8f4f4 #4f8f8f #4f8f8f #d8f4f4"></div>
<div class="a f" style="left:1376px;top:809px;font-size:13px;line-height:16px;letter-spacing:1.5px">MM</div>
<div class="a" style="left:1421px;top:814px;width:12px;height:5px;border:1px solid #333;border-top-color:#eee;background:#9cdcdc"></div>

<!-- status -->
<div class="a" style="left:5px;top:836px;width:1435px;height:29px;background:#aaffff;border:2px solid;border-color:#2f6f6f #eee #2f6f6f #2f6f6f"></div>
<div class="a f" style="left:395px;top:842px;font-size:12px;line-height:16px;letter-spacing:-.2px">drl,#1065,Line(.drill=non_plated),XS=186.107,YS=274.277,XE=186.107,YE=272.377,r2101,POS,Ang=90</div>
<div class="a" style="left:0;top:867px;width:1440px;height:2px;background:#555"></div>

<!-- language bar -->
<div class="a" style="left:1252px;top:849px;width:78px;height:23px;background:#d4d0c8;border:1px solid;border-color:#fff #888 #888 #fff"></div>
<div class="a" style="left:1262px;top:852px;width:16px;height:16px;background:#1ea83c;color:#fff;font:bold 13px/16px 'Liberation Sans';text-align:center">S</div>
<div class="a" style="left:1290px;top:852px;width:15px;height:16px;background:#fff6c0;border:1px solid #333;font:bold 12px/14px 'Liberation Sans';text-align:center">?</div>
<div class="a" style="left:1318px;top:852px;width:4px;height:2px;background:#000"></div>
<div class="a" style="left:1317px;top:862px;font:8px/8px 'Liberation Sans'">▼</div>

<!-- taskbar -->
<div class="a" style="left:0;top:870px;width:1440px;height:30px;background:#d4d0c8;border-top:1px solid #fff"></div>
<div class="t" style="left:3px;width:49px;padding-left:21px;font-weight:500"><svg viewBox="0 0 14 14"><path d="M2 3h4v4H2z" fill="#e02020"/><path d="M7 2h5v5H7z" fill="#20a020"/><path d="M2 8h4v4H2z" fill="#2040d0"/><path d="M7 8h5v4H7z" fill="#e0c020"/></svg>开始</div>
<div class="a" style="left:58px;top:875px;width:3px;height:23px;border:1px solid;border-color:#fff #808080 #808080 #fff"></div>
<svg class="a" style="left:69px;top:879px" width="15" height="15"><use href="#gl"/></svg>
<svg class="a" style="left:92px;top:879px" width="15" height="15" viewBox="0 0 14 14"><rect x="1" y="3" width="10" height="11" fill="#fff" stroke="#333"/><path d="M4 9l8-8 2 2-8 8z" fill="#3a6ac0"/></svg>
<svg class="a" style="left:115px;top:879px" width="15" height="15"><use href="#cl"/></svg>
<div class="a" style="left:140px;top:875px;width:3px;height:23px;border:1px solid;border-color:#fff #808080 #808080 #fff"></div>
<div class="t" style="left:150px"><svg viewBox="0 0 14 14"><path d="M7 0l2 5h5l-4 3 2 6-5-4-5 4 2-6-4-3h5z" fill="#e89030" stroke="#c05010" stroke-width=".5"/></svg>订单...</div>
<div class="t" style="left:216px"><svg viewBox="0 0 14 14"><rect width="14" height="14" fill="#101060"/><rect x="3" y="1" width="8" height="5" fill="#fff"/><rect x="3" y="8" width="8" height="6" fill="#e03030"/></svg>Total ...</div>
<div class="t" style="left:282px"><svg><use href="#cl"/></svg>收件...</div>
<div class="t" style="left:348px"><svg><use href="#gl"/></svg>pcbn...</div>
<div class="t" style="left:414px;letter-spacing:-.4px"><svg viewBox="0 0 14 14"><circle cx="7" cy="7" r="6.500" fill="#2aa0c0"/><circle cx="7" cy="7" r="3.500" fill="#208030"/><circle cx="7" cy="7" r="1.500" fill="#e8d040"/></svg>Genesis</div>
<div class="t" style="left:480px;letter-spacing:-.3px"><svg><use href="#x"/></svg>Engin...</div>
<div class="t" style="left:546px;letter-spacing:-.3px"><svg><use href="#x"/></svg>Progr...</div>
<div class="t" style="left:612px"><svg viewBox="0 0 14 14"><rect width="13" height="14" fill="#fff" stroke="#555"/><rect x="1" y="1" width="8" height="10" fill="#2050b0"/><path d="M3 4l2 5 2-5" stroke="#fff" fill="none"/></svg>部分...</div>
<div class="t" style="left:678px"><svg viewBox="0 0 14 14"><rect x="2" width="10" height="14" fill="#fff" stroke="#333"/><path d="M4 3h6M4 6h6M4 9h6" stroke="#333"/></svg>4v2d...</div>
<div class="t" style="left:744px;border-color:#404040 #fff #fff #404040;background:#eceae4"><svg><use href="#x"/></svg>Grap...</div>
<div class="t" style="left:810px"><svg><use href="#x"/></svg>4v2d...</div>
<div class="t" style="left:876px;letter-spacing:-.3px"><svg><use href="#xl"/></svg>4V2D...</div>
<div class="t" style="left:942px;letter-spacing:-.3px"><svg><use href="#xl"/></svg>CAM...</div>
<div class="t" style="left:1008px;letter-spacing:-.3px"><svg><use href="#xl"/></svg>4V2D...</div>
<div class="t" style="left:1074px"><svg><use href="#x"/></svg>4v2d...</div>
<div class="t" style="left:1140px;letter-spacing:-.3px"><svg viewBox="0 0 14 14"><rect width="13" height="14" fill="#fff" stroke="#222"/><path d="M2 4h5M2 7h8M2 10h5" stroke="#222"/><circle cx="10" cy="10" r="2.500" fill="#222"/></svg>Lister...</div>
<div class="t" style="left:1206px;letter-spacing:-.2px"><svg><use href="#x"/></svg>Drill T...</div>
<div class="a" style="left:1287px;top:875px;width:153px;height:23px;border:1px solid;border-color:#808080 #d4d0c8 #fff #808080"></div>
<svg class="a" style="left:1293px;top:878px" width="90" height="18" viewBox="0 0 90 18"><path d="M1 10l7-8 7 7-7 8z" fill="#b0a040" stroke="#333"/><path d="M6 10l3-3 3 3-3 3z" fill="#e8d840"/><path d="M20 16L26 3l2 13z" fill="#e02020"/><path d="M28 16l2-8 3 8z" fill="#20a040"/><circle cx="41" cy="10" r="6" fill="#fff" stroke="#3060c0" stroke-width="2"/><path d="M41 2v6" stroke="#e07010" stroke-width="3"/><rect x="54" y="2" width="14" height="14" fill="#7a8a6a"/><circle cx="61" cy="9" r="4.500" fill="none" stroke="#eee"/><path d="M72 2l12 14M84 2L72 16" stroke="#401080" stroke-width="3"/></svg>
<div class="a" style="left:1397px;top:881px;font:12px/14px 'Liberation Sans',sans-serif;color:#222">12:26</div>
</body></html>
